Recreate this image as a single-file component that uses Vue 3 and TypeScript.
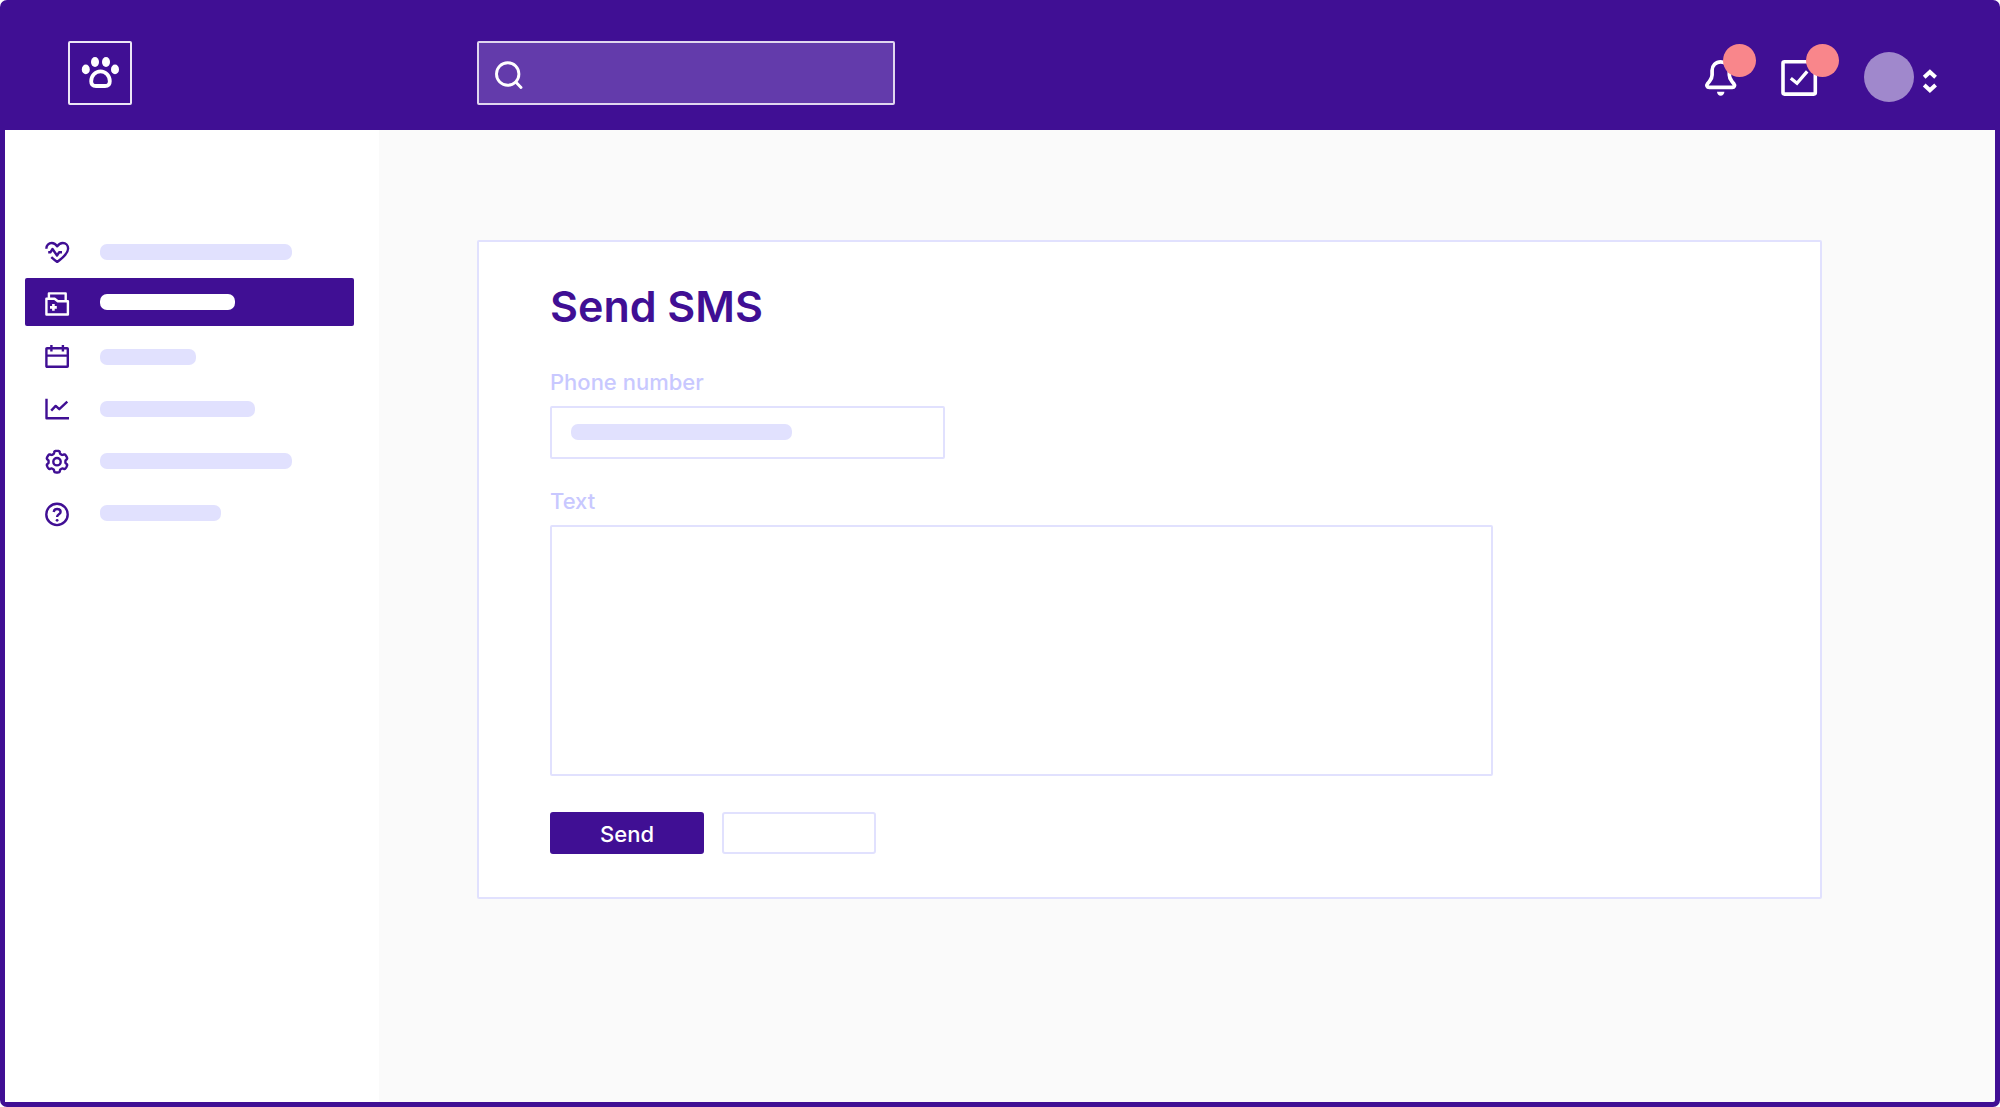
<script setup lang="ts">
import { ref } from 'vue'

interface NavItem {
  id: string
  label: string
  barWidth: number
}

const navItems: NavItem[] = [
  { id: 'health', label: 'Health', barWidth: 192 },
  { id: 'records', label: 'Records', barWidth: 135 },
  { id: 'calendar', label: 'Calendar', barWidth: 96 },
  { id: 'reports', label: 'Reports', barWidth: 155 },
  { id: 'settings', label: 'Settings', barWidth: 192 },
  { id: 'help', label: 'Help', barWidth: 121 },
]

const activeId = ref<string>('records')
const query = ref<string>('')
const phone = ref<string>('')
const message = ref<string>('')

// Outline of a cog with six rounded teeth, centred on (cx, cy).
function gearPath(cx: number, cy: number): string {
  const points: string[] = []
  for (let i = 0; i < 120; i++) {
    const angle = (i / 120) * Math.PI * 2
    const r = 9.6 + 1.2 * Math.tanh(3 * (Math.cos(6 * angle) + 0.25))
    points.push(`${(cx + r * Math.sin(angle)).toFixed(2)} ${(cy - r * Math.cos(angle)).toFixed(2)}`)
  }
  return `M${points.join('L')}Z`
}

const gear = gearPath(14, 14.7)
</script>

<template>
  <div class="frame">
    <header class="topbar">
      <div class="brand">
        <a href="#" class="logo" aria-label="Home">
          <svg viewBox="0 0 60 60" width="60" height="60" aria-hidden="true">
            <g fill="currentColor">
              <ellipse cx="15.8" cy="26.4" rx="4" ry="4.9" />
              <ellipse cx="25" cy="19" rx="4" ry="4.9" />
              <ellipse cx="36" cy="19" rx="4" ry="4.9" />
              <ellipse cx="45" cy="26.4" rx="4" ry="4.9" />
            </g>
            <path
              d="M30.5 28.3c-5.2 0-9.3 4.6-9.3 9.9 0 3.2 2 4.8 4.8 4.8h9c2.8 0 4.8-1.6 4.8-4.8 0-5.3-4.1-9.9-9.3-9.9z"
              fill="none" stroke="currentColor" stroke-width="3.8" />
          </svg>
        </a>
      </div>

      <label class="search">
        <svg viewBox="0 0 32 32" width="32" height="32" fill="none" stroke="currentColor" stroke-width="2.9"
          stroke-linecap="round" aria-hidden="true">
          <circle cx="16.7" cy="17" r="11.2" />
          <path d="M25 25.2l5 5.2" />
        </svg>
        <input v-model="query" type="search" aria-label="Search" />
      </label>

      <div class="actions">
        <button type="button" class="icon-button" aria-label="Notifications">
          <svg viewBox="0 0 40 40" width="40" height="40" aria-hidden="true">
            <path
              d="M22.7 4.8c-4.9 0-8.6 3.8-8.6 8.6v4.6c0 2.8-1 4.3-2.6 6.3l-1.900 2.400c-1.400 1.700-.5 3.600 1.600 3.600h23c2.100 0 3-1.900 1.600-3.600l-1.900-2.400c-1.600-2-2.600-3.500-2.600-6.300v-4.600c0-4.800-3.700-8.600-8.600-8.600z"
              fill="none" stroke="currentColor" stroke-width="3.7" stroke-linejoin="round" />
            <path d="M19 34.7h7.4c0 2.3-1.6 4-3.7 4s-3.7-1.7-3.7-4z" fill="currentColor" />
          </svg>
          <span class="badge"></span>
        </button>
        <button type="button" class="icon-button" aria-label="Tasks">
          <svg viewBox="0 0 40 40" width="40" height="40" fill="none" stroke="currentColor" aria-hidden="true">
            <rect x="2" y="4.8" width="32.3" height="32.3" rx="1.5" stroke-width="3.6" />
            <path d="M9.8 21.3l6.2 5 10.2-11.9" stroke-width="3.3" />
          </svg>
          <span class="badge"></span>
        </button>
        <button type="button" class="account" aria-label="Account">
          <span class="avatar"></span>
          <svg viewBox="0 0 16 32" width="16" height="32" fill="none" stroke="currentColor" stroke-width="4"
            aria-hidden="true">
            <path d="M2.200 16.200l5.700-5.200 5.700 5.200M2.200 24l5.700 5.200 5.700-5.200" />
          </svg>
        </button>
      </div>
    </header>

    <div class="body">
      <nav class="sidebar" aria-label="Main">
        <a v-for="item in navItems" :key="item.id" href="#" class="nav-item"
          :class="{ active: item.id === activeId }" :aria-label="item.label"
          @click.prevent="activeId = item.id">
          <svg viewBox="0 0 28 28" width="28" height="28" fill="none" stroke="currentColor" stroke-width="2.4"
            stroke-linejoin="round" aria-hidden="true">
            <template v-if="item.id === 'health'">
              <path
                d="M3.4 10.8C3.2 7.2 5.8 5 8.8 5c2.4 0 4 1.2 5.4 3.3C15.6 6.2 17.2 5 19.8 5c3 0 5.3 2.3 5.3 5.6 0 5-5.4 9.4-10.9 13.3-2.2-1.3-4-2.9-5.9-4.7" />
              <path d="M5.2 14.3h2.2l2.1-3.3 4.5 6.5 2.2-3.2H19" />
            </template>
            <template v-else-if="item.id === 'records'">
              <path d="M3.4 10.8h8.2l3.2 2.5h10.1v13.2H3.4z" />
              <path d="M5.9 10.8V5.4h16.8V13" />
              <path d="M10.4 16v6.800M7 19.4h6.8" stroke-width="2.6" />
            </template>
            <template v-else-if="item.id === 'calendar'">
              <rect x="3.4" y="5.2" width="21.4" height="18.6" rx="0.6" />
              <path d="M3.4 12.6h21.4M8.4 2v6.6M19.9 2v6.6" />
            </template>
            <template v-else-if="item.id === 'reports'">
              <path d="M3.5 3.7v19.6H26" />
              <path d="M8.2 15.6l4.5-4.7 3.6 3.3 8-7.5" />
            </template>
            <template v-else-if="item.id === 'settings'">
              <path :d="gear" />
              <circle cx="14" cy="14.7" r="3.7" />
            </template>
            <template v-else>
              <circle cx="14" cy="15.4" r="10.7" />
              <path d="M10.700 13c.2-1.900 1.500-3 3.400-3 2.100 0 3.500 1.200 3.500 2.900 0 2.500-3.500 2.200-3.500 5" />
              <circle cx="14.1" cy="21.3" r="1.4" fill="currentColor" stroke="none" />
            </template>
          </svg>
          <span class="bar" :style="{ width: item.barWidth + 'px' }"></span>
        </a>
      </nav>

      <main class="content">
        <form class="card" @submit.prevent>
          <h1>Send SMS</h1>
          <div class="field">
            <label for="phone">Phone number</label>
            <div class="phone">
              <input id="phone" v-model="phone" type="tel" />
              <span v-if="!phone" class="bar phone-bar"></span>
            </div>
          </div>
          <div class="field">
            <label for="message">Text</label>
            <textarea id="message" v-model="message"></textarea>
          </div>
          <div class="buttons">
            <button type="submit" class="primary">Send</button>
            <button type="button" class="secondary" aria-label="Cancel"></button>
          </div>
        </form>
      </main>
    </div>
  </div>
</template>

<style>
body {
  margin: 0;
  background: #fff;
}
</style>

<style scoped>
* {
  box-sizing: border-box;
}

.frame {
  --purple: #400f94;
  --lavender: #e1e1fe;
  display: flex;
  flex-direction: column;
  min-height: 100vh;
  border: 5px solid var(--purple);
  border-radius: 7px;
  background: #fafafa;
  font-family: Inter, "Liberation Sans", sans-serif;
}

button,
input,
textarea {
  margin: 0;
  padding: 0;
  font-family: inherit;
}

svg {
  display: block;
  flex: none;
}

.topbar {
  display: flex;
  align-items: center;
  padding: 36px 57px 25px 63px;
  background: var(--purple);
  color: #fff;
}

.brand {
  flex: none;
  width: 409px;
}

.logo {
  display: block;
  width: 64px;
  height: 64px;
  border: 2px solid #ece6f6;
  border-radius: 2px;
  color: #fff;
}

.search {
  display: flex;
  align-items: center;
  width: 418px;
  height: 64px;
  padding: 0 12px;
  border: 2px solid #e0d6ef;
  border-radius: 2px;
  background: #633bab;
}

.search input {
  flex: 1;
  min-width: 0;
  margin-left: 12px;
  border: 0;
  outline: 0;
  background: transparent;
  color: #fff;
  font-size: 22px;
}

.actions {
  display: flex;
  align-items: center;
  gap: 43px;
  margin-left: auto;
  padding-top: 8px;
}

.icon-button,
.account {
  position: relative;
  border: 0;
  background: none;
  color: #fff;
  cursor: pointer;
}

.badge {
  position: absolute;
  top: -13px;
  left: 25px;
  width: 33px;
  height: 33px;
  border-radius: 50%;
  background: #f9868b;
}

.account {
  display: flex;
  align-items: center;
  gap: 8px;
}

.avatar {
  width: 50px;
  height: 50px;
  border-radius: 50%;
  background: #a088cc;
}

.body {
  display: flex;
  flex: 1;
}

.sidebar {
  flex: none;
  width: 374px;
  padding: 96px 25px 0 20px;
  background: #fff;
}

.nav-item {
  display: flex;
  align-items: center;
  gap: 29px;
  height: 52px;
  padding-left: 18px;
  border-radius: 2px;
  color: var(--purple);
}

.nav-item.active {
  height: 48px;
  margin-bottom: 5px;
  background: var(--purple);
  color: #fff;
}

.bar {
  height: 16px;
  border-radius: 7px;
  background: var(--lavender);
}

.active .bar {
  background: #fff;
}

.content {
  flex: 1;
  min-width: 0;
  padding: 110px 173px 110px 98px;
}

.card {
  padding: 38px 71px 43px;
  border: 2px solid var(--lavender);
  border-radius: 2px;
  background: #fff;
}

h1 {
  margin: 0 0 36px;
  color: var(--purple);
  font-size: 43px;
  font-weight: 600;
  line-height: 52px;
}

.field {
  display: flex;
  flex-direction: column;
  gap: 10px;
  margin-bottom: 28px;
}

.field label {
  color: #c8c8ff;
  font-size: 22px;
  font-weight: 500;
  line-height: 28px;
}

.phone {
  position: relative;
  max-width: 395px;
}

.phone input,
textarea {
  display: block;
  width: 100%;
  border: 2px solid var(--lavender);
  border-radius: 2px;
  outline: 0;
  background: #fff;
  color: var(--purple);
  font-size: 22px;
}

.phone input {
  height: 53px;
  padding: 0 19px;
}

.phone-bar {
  position: absolute;
  top: 18px;
  left: 21px;
  width: 221px;
  pointer-events: none;
}

textarea {
  max-width: 943px;
  height: 251px;
  padding: 16px 19px;
  resize: none;
}

.buttons {
  display: flex;
  gap: 18px;
  margin-top: 36px;
}

.buttons button {
  width: 154px;
  height: 42px;
  padding-top: 2px;
  border: 2px solid var(--lavender);
  border-radius: 3px;
  background: #fff;
  font-size: 22px;
  font-weight: 500;
  cursor: pointer;
}

.buttons .primary {
  border-color: var(--purple);
  background: var(--purple);
  color: #fff;
}
</style>
